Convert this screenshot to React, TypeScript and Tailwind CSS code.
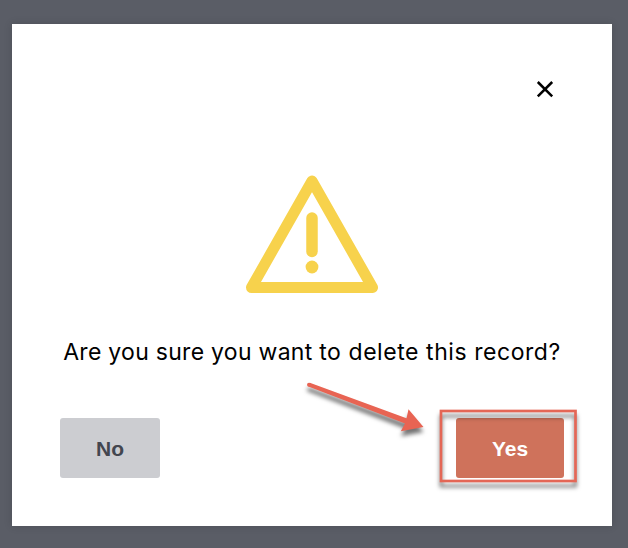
export default function App() {
  return (
    <div className="flex h-[548px] w-[628px] items-start bg-[#5a5d66] pl-3 pt-6">
      <div
        role="dialog"
        className="relative flex h-[502px] w-[600px] flex-col bg-white px-12 pt-[53px] shadow-[0_0_8px_rgba(0,0,0,0.15)]"
      >
        <button aria-label="Close" className="flex h-6 w-6 items-center justify-center self-end mr-[7px]">
          <svg width="24" height="24" viewBox="0 0 24 24" stroke="#000" strokeWidth="2.5" fill="none">
            <path d="M4.8 5L19.2 19.4M19.2 5L4.8 19.4" />
          </svg>
        </button>
        <svg className="mt-[69px] self-center" width="140" height="130" viewBox="242 170 140 130" fill="none" stroke="#f7d24c">
          <path d="M312 181L372.5 287.5H251.5Z" strokeWidth="11" strokeLinejoin="round" />
          <path d="M312 218V251.5" strokeWidth="11.5" strokeLinecap="round" />
          <circle cx="312" cy="267" r="6.4" fill="#f7d24c" stroke="none" />
        </svg>
        <p className="mt-9 whitespace-nowrap text-center font-['Inter',sans-serif] text-[23px] leading-8 tracking-[0.28px] text-black">
          Are you sure you want <span className="tracking-[0.56px]">to delete this record?</span>
        </p>
        <div className="mt-[50px] flex justify-between font-['Liberation_Sans',Arial,sans-serif] text-[21px] font-bold">
          <button className="h-[60px] w-[100px] rounded-[3px] bg-[#cccdd1] pt-0.5 text-[#43464f]">No</button>
          <button className="h-[60px] w-[108px] rounded-[3px] bg-[#cf725b] pt-0.5 text-white">Yes</button>
        </div>
        <svg className="absolute left-[280px] top-[346px]" width="310" height="130" viewBox="292 370 310 130">
          <g className="[filter:drop-shadow(0px_5.5px_2px_rgba(0,0,0,0.55))]">
            <circle cx="309" cy="384.7" r="2" fill="#e86453" />
            <path d="M309.8 382.8L406.5 418.2L408.5 409.3L423.5 427L400.8 431.3L405 423.4L308.3 386.6Z" fill="#e86453" />
            <rect x="441" y="411" width="134.5" height="70" fill="none" stroke="#e46756" strokeWidth="2.7" />
          </g>
        </svg>
      </div>
    </div>
  );
}
